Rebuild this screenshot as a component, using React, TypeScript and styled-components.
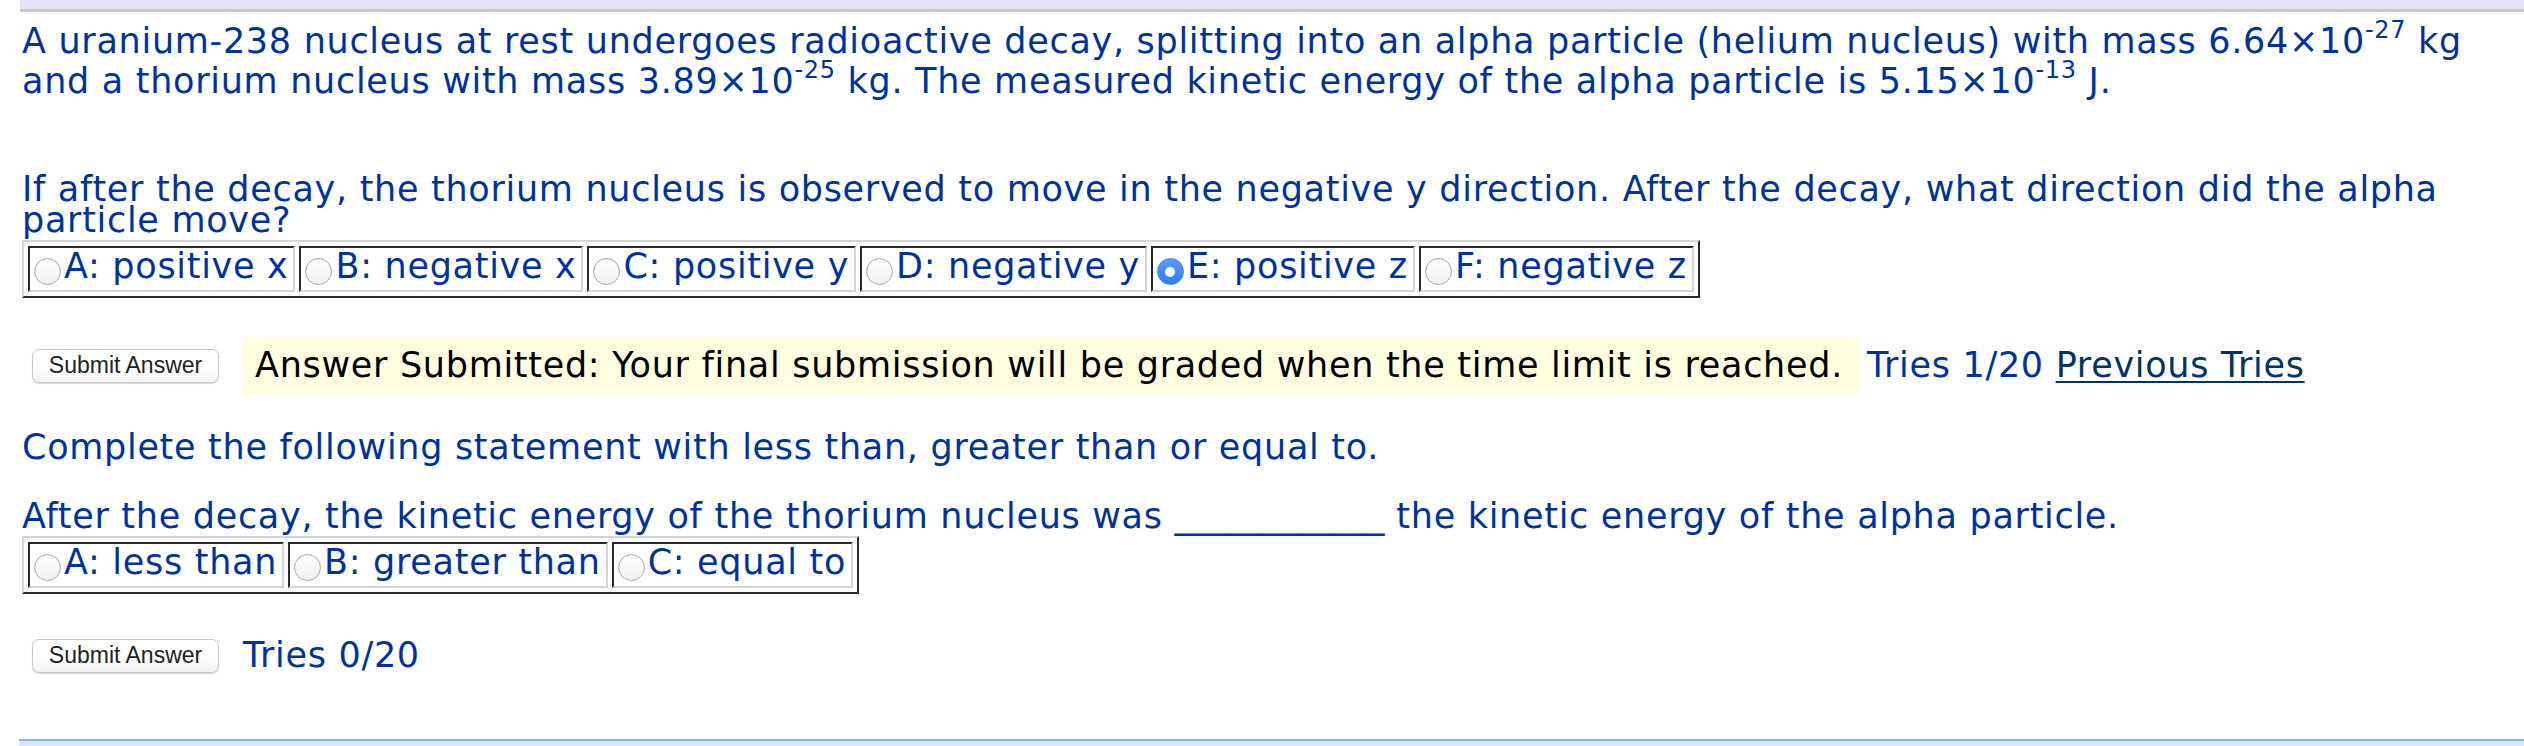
import React from 'react';
import styled, { createGlobalStyle } from 'styled-components';

const GlobalStyle = createGlobalStyle`
  html, body {
    margin: 0;
    padding: 0;
    background: #ffffff;
  }
  body {
    font-family: Verdana, "DejaVu Sans", sans-serif;
    font-size: 35px;
    letter-spacing: 0.7px;
    color: #003399;
  }
`;

const Page = styled.div`
  display: flex;
  flex-direction: column;
  box-sizing: border-box;
  width: 2524px;
  height: 746px;
  padding-left: 20px;
  overflow: hidden;
`;

const TopBand = styled.div`
  height: 9px;
  background: #e4e4f8;
  border-bottom: 3px solid #c8c8c8;
`;

const BottomBand = styled.div`
  margin-top: auto;
  margin-left: -1px;
  height: 5px;
  background: #e2e2f9;
  border-top: 2px solid #80b4ef;
`;

const Content = styled.div`
  padding-left: 2px;
`;

const Statement = styled.p<{ $gap: number }>`
  margin: ${(p) => p.$gap}px 0 0;
  line-height: 40px;

  sup {
    font-size: 24px;
    line-height: 0;
    vertical-align: 15px;
  }
`;

const Prompt = styled.div<{ $gap: number }>`
  margin-top: ${(p) => p.$gap}px;
  line-height: 31px;
`;

const Blank = styled.span`
  letter-spacing: 0;
`;

const ChoiceTable = styled.table`
  margin-top: 4px;
  border-collapse: separate;
  border-spacing: 4px;
  border: 2px solid;
  border-color: #d4d4d4 #2a2a2a #2a2a2a #d4d4d4;
  font-size: inherit;
  color: inherit;
`;

const ChoiceCell = styled.td`
  border: 2px solid;
  border-color: #2a2a2a #d4d4d4 #d4d4d4 #2a2a2a;
  padding: 3px 5px 5px 4px;
  line-height: 31px;
  white-space: nowrap;
  font-size: inherit;
  color: inherit;
`;

const Radio = styled.span<{ $checked?: boolean }>`
  display: inline-block;
  box-sizing: border-box;
  width: 27px;
  height: 27px;
  margin-right: 3px;
  border-radius: 50%;
  vertical-align: -7px;
  position: relative;
  border: 1px solid ${(p) => (p.$checked ? '#3a82f0' : '#a9a9a9')};
  background: ${(p) =>
    p.$checked
      ? 'linear-gradient(#5a9cf8, #2f7df2)'
      : 'linear-gradient(#ffffff, #f1f1f1)'};
  box-shadow: ${(p) => (p.$checked ? 'none' : 'inset 0 1px 1px rgba(0,0,0,0.06)')};

  &::after {
    content: '';
    display: ${(p) => (p.$checked ? 'block' : 'none')};
    position: absolute;
    left: 50%;
    top: 50%;
    width: 10px;
    height: 10px;
    margin: -5px 0 0 -5px;
    border-radius: 50%;
    background: #ffffff;
  }
`;

const SubmitRow = styled.div<{ $gap: number }>`
  display: flex;
  align-items: center;
  margin-top: ${(p) => p.$gap}px;
  padding-left: 10px;
  white-space: nowrap;
`;

const SubmitButton = styled.button`
  flex: none;
  box-sizing: border-box;
  width: 187px;
  height: 34px;
  margin-right: 24px;
  padding: 0;
  font-family: "Liberation Sans", Arial, sans-serif;
  font-size: 23px;
  letter-spacing: 0;
  color: #222222;
  background: linear-gradient(#ffffff, #ffffff 55%, #f2f2f2);
  border: 1px solid #c9c9c9;
  border-radius: 7px;
  box-shadow: 0 1px 1px rgba(0, 0, 0, 0.18);
`;

const Notice = styled.span`
  display: inline-block;
  padding: 8px 16px 8px 12px;
  line-height: 41px;
  color: #000000;
  background: #ffffe0;
`;

const Tries = styled.span<{ $lead?: number }>`
  margin-left: ${(p) => p.$lead ?? 0}px;
  line-height: 41px;
`;

const PrevLink = styled.a`
  color: #003366;
  text-decoration: underline;
  text-decoration-thickness: 2px;
  text-underline-offset: 4px;
`;

type Choice = { key: string; label: string; checked?: boolean };

const ChoiceRow = ({ choices }: { choices: Choice[] }) => (
  <ChoiceTable>
    <tbody>
      <tr>
        {choices.map((c) => (
          <ChoiceCell key={c.key}>
            <Radio $checked={c.checked} />
            {c.key}: {c.label}
          </ChoiceCell>
        ))}
      </tr>
    </tbody>
  </ChoiceTable>
);

const directions: Choice[] = [
  { key: 'A', label: 'positive x' },
  { key: 'B', label: 'negative x' },
  { key: 'C', label: 'positive y' },
  { key: 'D', label: 'negative y' },
  { key: 'E', label: 'positive z', checked: true },
  { key: 'F', label: 'negative z' },
];

const comparisons: Choice[] = [
  { key: 'A', label: 'less than' },
  { key: 'B', label: 'greater than' },
  { key: 'C', label: 'equal to' },
];

export default function App() {
  return (
    <>
      <GlobalStyle />
      <Page>
        <TopBand />
        <Content>
          <Statement $gap={9}>
            A uranium-238 nucleus at rest undergoes radioactive decay, splitting into an alpha
            particle (helium nucleus) with mass 6.64×10<sup>-27</sup> kg and a thorium nucleus
            with mass 3.89×10<sup>-25</sup> kg. The measured kinetic energy of the alpha
            particle is 5.15×10<sup>-13</sup> J.
          </Statement>

          <Prompt $gap={73}>
            If after the decay, the thorium nucleus is observed to move in the negative y
            direction. After the decay, what direction did the alpha particle move?
          </Prompt>
          <ChoiceRow choices={directions} />

          <SubmitRow $gap={39}>
            <SubmitButton type="button">Submit Answer</SubmitButton>
            <Notice>
              Answer Submitted: Your final submission will be graded when the time limit is
              reached.
            </Notice>
            <Tries $lead={8}>
              Tries 1/20 <PrevLink href="#">Previous Tries</PrevLink>
            </Tries>
          </SubmitRow>

          <Statement $gap={33}>
            Complete the following statement with less than, greater than or equal to.
          </Statement>

          <Prompt $gap={34}>
            After the decay, the kinetic energy of the thorium nucleus was{' '}
            <Blank>____________</Blank> the kinetic energy of the alpha particle.
          </Prompt>
          <ChoiceRow choices={comparisons} />

          <SubmitRow $gap={41}>
            <SubmitButton type="button">Submit Answer</SubmitButton>
            <Tries>Tries 0/20</Tries>
          </SubmitRow>
        </Content>
        <BottomBand />
      </Page>
    </>
  );
}
